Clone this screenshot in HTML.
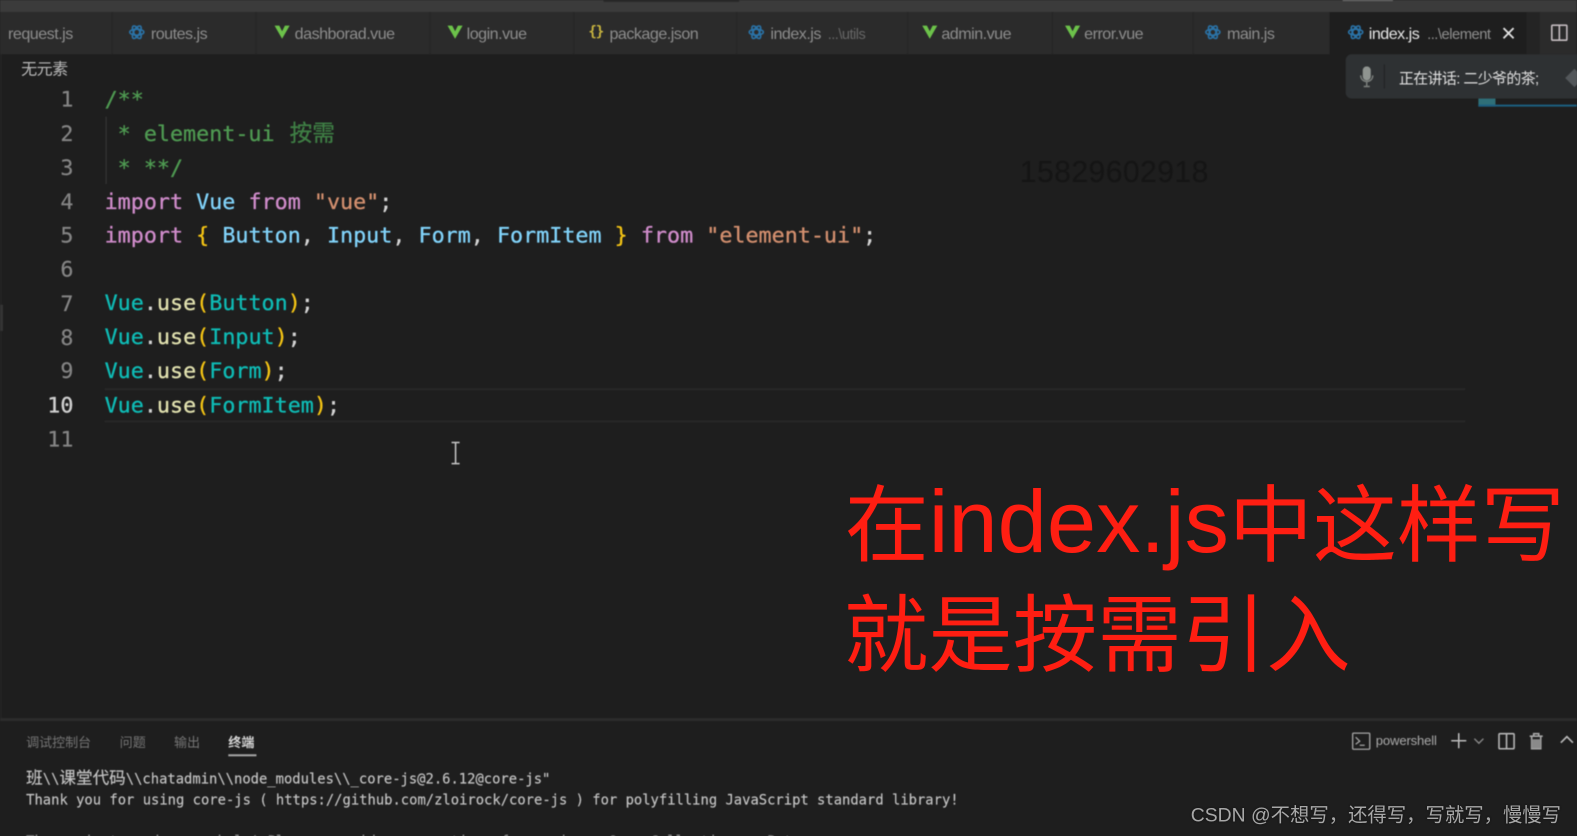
<!DOCTYPE html>
<html lang="zh">
<head>
<meta charset="utf-8">
<title>index.js</title>
<style>
html,body{margin:0;padding:0;width:1577px;height:836px;overflow:hidden;background:#1e1e1e}
#s{position:absolute;left:0;top:0;width:1568px;height:831px;transform:scale(1.0057);transform-origin:0 0;overflow:hidden;background:#1e1e1e;font-family:"Liberation Sans","Noto Sans CJK SC",sans-serif}
#b{position:absolute;left:0;top:0;width:1568px;height:831px;filter:blur(.45px)}
.a{position:absolute;white-space:pre}
.tab{font-size:16px;line-height:20px;top:24.5px;color:#8c8c8c;letter-spacing:-.5px}
.sep{position:absolute;top:12px;width:1px;height:42px;background:#252525}
.ic{position:absolute}
.ln{position:absolute;left:20px;width:53px;text-align:right;font:21.6px/34px "DejaVu Sans Mono",monospace;color:#858585;-webkit-text-stroke:.2px #858585}
.c{position:absolute;left:104px;font:21.6px/34px "DejaVu Sans Mono","Noto Sans CJK SC",monospace;white-space:pre;color:#d4d4d4;-webkit-text-stroke:.3px}
.cm{color:#4f9a52}.kw{color:#d08ccb}.bl{color:#82d4fb}.st{color:#d4906f}.ye{color:#f5c515}.te{color:#0fbcb6}.fn{color:#e2e2b0}.lt{color:#d4d4d4}
.pt{font-size:13px;line-height:18px;top:729.5px;color:#757575}
.t{position:absolute;left:26px;font:13.75px/20px "DejaVu Sans Mono","Noto Sans CJK SC",monospace;color:#c4c4c4;white-space:pre;-webkit-text-stroke:.15px}
</style>
</head>
<body>
<div id="s">
<div id="b">
  <!-- title bar -->
  <div class="a" style="left:0;top:0;width:1568px;height:12px;background:#3b3b3b"></div>
  <div class="a" style="left:600px;top:0;width:135px;height:2px;background:#2a2a2a"></div>
  <div class="a" style="left:1335px;top:0;width:50px;height:1px;background:#7a7a7a"></div>
  <!-- tab bar -->
  <div class="a" style="left:0;top:12px;width:1568px;height:42px;background:#2b2b2b"></div>
  <div class="sep" style="left:111px"></div>
  <div class="sep" style="left:254px"></div>
  <div class="sep" style="left:427px"></div>
  <div class="sep" style="left:570px"></div>
  <div class="sep" style="left:732px"></div>
  <div class="sep" style="left:902px"></div>
  <div class="sep" style="left:1046px"></div>
  <div class="sep" style="left:1186px"></div>
  <div class="a" style="left:1322px;top:12px;width:196px;height:42px;background:#1e1e1e"></div>
  <div class="a" style="left:1518px;top:12px;width:13px;height:42px;background:#242424"></div>

  <div class="a tab" style="left:8px">request.js</div>

  <svg class="ic" style="left:128px;top:24px" width="16" height="16" viewBox="0 0 16 16" fill="none" stroke="#2a72a6" stroke-width="1.6"><ellipse cx="8" cy="8" rx="7" ry="3"/><ellipse cx="8" cy="8" rx="7" ry="3" transform="rotate(60 8 8)"/><ellipse cx="8" cy="8" rx="7" ry="3" transform="rotate(120 8 8)"/></svg>
  <div class="a tab" style="left:150px">routes.js</div>

  <svg class="ic" style="left:273px;top:24px" width="15" height="16" viewBox="0 0 16 16"><path d="M0 1H5L8 7L11 1H16L8 15Z" fill="#6cc24a"/></svg>
  <div class="a tab" style="left:293px">dashborad.vue</div>

  <svg class="ic" style="left:445px;top:24px" width="15" height="16" viewBox="0 0 16 16"><path d="M0 1H5L8 7L11 1H16L8 15Z" fill="#6cc24a"/></svg>
  <div class="a tab" style="left:464px">login.vue</div>

  <div class="a" style="left:585px;top:22px;font:bold 14px/20px 'DejaVu Sans Mono',monospace;color:#c9b53f;letter-spacing:-1px">{}</div>
  <div class="a tab" style="left:606px">package.json</div>

  <svg class="ic" style="left:744px;top:24px" width="16" height="16" viewBox="0 0 16 16" fill="none" stroke="#2a72a6" stroke-width="1.6"><ellipse cx="8" cy="8" rx="7" ry="3"/><ellipse cx="8" cy="8" rx="7" ry="3" transform="rotate(60 8 8)"/><ellipse cx="8" cy="8" rx="7" ry="3" transform="rotate(120 8 8)"/></svg>
  <div class="a tab" style="left:766px">index.js</div>
  <div class="a tab" style="left:823px;font-size:14.5px;color:#666">...\utils</div>

  <svg class="ic" style="left:917px;top:24px" width="15" height="16" viewBox="0 0 16 16"><path d="M0 1H5L8 7L11 1H16L8 15Z" fill="#6cc24a"/></svg>
  <div class="a tab" style="left:936px">admin.vue</div>

  <svg class="ic" style="left:1059px;top:24px" width="15" height="16" viewBox="0 0 16 16"><path d="M0 1H5L8 7L11 1H16L8 15Z" fill="#6cc24a"/></svg>
  <div class="a tab" style="left:1078px">error.vue</div>

  <svg class="ic" style="left:1198px;top:24px" width="16" height="16" viewBox="0 0 16 16" fill="none" stroke="#2a72a6" stroke-width="1.6"><ellipse cx="8" cy="8" rx="7" ry="3"/><ellipse cx="8" cy="8" rx="7" ry="3" transform="rotate(60 8 8)"/><ellipse cx="8" cy="8" rx="7" ry="3" transform="rotate(120 8 8)"/></svg>
  <div class="a tab" style="left:1220px">main.js</div>

  <svg class="ic" style="left:1340px;top:24px" width="16" height="16" viewBox="0 0 16 16" fill="none" stroke="#2a72a6" stroke-width="1.6"><ellipse cx="8" cy="8" rx="7" ry="3"/><ellipse cx="8" cy="8" rx="7" ry="3" transform="rotate(60 8 8)"/><ellipse cx="8" cy="8" rx="7" ry="3" transform="rotate(120 8 8)"/></svg>
  <div class="a tab" style="left:1361px;color:#e6e6e6">index.js</div>
  <div class="a tab" style="left:1419px;font-size:14.7px;color:#8f8f8f">...\element</div>
  <svg class="ic" style="left:1494px;top:27px" width="12" height="12" viewBox="0 0 12 12" stroke="#e4e4e4" stroke-width="1.8"><path d="M1 1L11 11M11 1L1 11"/></svg>
  <svg class="ic" style="left:1542px;top:24px" width="17" height="17" viewBox="0 0 17 17" fill="none" stroke="#c4bcc0" stroke-width="1.6"><rect x="1" y="1" width="15" height="15" rx="1"/><path d="M8.5 1V16"/></svg>

  <!-- breadcrumb and left edge -->
  <div class="a" style="left:21px;top:60.5px;font-size:16px;line-height:18px;letter-spacing:-.6px;color:#b8b8b8">无元素</div>
  <div class="a" style="left:0;top:54px;width:2px;height:660px;background:#242424"></div>
  <div class="a" style="left:0;top:303px;width:3px;height:26px;background:#343434"></div>

  <!-- line numbers -->
  <div class="ln" style="top:83px">1</div>
  <div class="ln" style="top:117px">2</div>
  <div class="ln" style="top:150.5px">3</div>
  <div class="ln" style="top:184.5px">4</div>
  <div class="ln" style="top:218px">5</div>
  <div class="ln" style="top:251.5px">6</div>
  <div class="ln" style="top:285.5px">7</div>
  <div class="ln" style="top:319.5px">8</div>
  <div class="ln" style="top:353px">9</div>
  <div class="ln" style="top:386.5px;color:#d0d0d0;-webkit-text-stroke:.3px #d0d0d0">10</div>
  <div class="ln" style="top:420.5px">11</div>

  <!-- indent guide, current line -->
  <div class="a" style="left:105px;top:116px;width:1px;height:67px;background:#3a3a3a"></div>
  <div class="a" style="left:104px;top:386px;width:1353px;height:30px;border:solid #282828;border-width:2px 0"></div>

  <!-- code -->
  <div class="c" style="top:82.5px"><span class="cm">/**</span></div>
  <div class="c" style="top:116px"><span class="cm"> * element-ui <span style="font-size:22.5px;margin-left:2px;color:#3f7f45">按需</span></span></div>
  <div class="c" style="top:150.5px"><span class="cm"> * **/</span></div>
  <div class="c" style="top:184.5px"><span class="kw">import</span> <span class="bl">Vue</span> <span class="kw">from</span> <span class="st">"vue"</span><span class="lt">;</span></div>
  <div class="c" style="top:218px"><span class="kw">import</span> <span class="ye">{</span> <span class="bl">Button</span>, <span class="bl">Input</span>, <span class="bl">Form</span>, <span class="bl">FormItem</span> <span class="ye">}</span> <span class="kw">from</span> <span class="st">"element-ui"</span><span class="lt">;</span></div>
  <div class="c" style="top:285px"><span class="te">Vue</span>.<span class="fn">use</span><span class="ye">(</span><span class="te">Button</span><span class="ye">)</span>;</div>
  <div class="c" style="top:319px"><span class="te">Vue</span>.<span class="fn">use</span><span class="ye">(</span><span class="te">Input</span><span class="ye">)</span>;</div>
  <div class="c" style="top:353px"><span class="te">Vue</span>.<span class="fn">use</span><span class="ye">(</span><span class="te">Form</span><span class="ye">)</span>;</div>
  <div class="c" style="top:386.5px"><span class="te">Vue</span>.<span class="fn">use</span><span class="ye">(</span><span class="te">FormItem</span><span class="ye">)</span>;</div>

  <!-- I-beam -->
  <svg class="ic" style="left:447px;top:439px" width="12" height="23" viewBox="0 0 12 23" fill="none" stroke="#c8c8c8" stroke-width="1.5"><path d="M2 1H10M6 1V22M2 22H10"/></svg>

  <!-- watermark number -->
  <div class="a" style="left:1014px;top:155px;font-size:30px;line-height:34px;letter-spacing:.4px;color:#151515">15829602918</div>

  <!-- speaking toast -->
  <div class="a" style="left:1470px;top:98px;width:17px;height:8px;background:#2f6f78"></div>
  <div class="a" style="left:1470px;top:104px;width:98px;height:2px;background:#1d5f80"></div>
  <div class="a" style="left:1338px;top:54px;width:240px;height:44px;background:#2e3133;border-radius:6px"></div>
  <svg class="ic" style="left:1352px;top:66px" width="14" height="21" viewBox="0 0 14 21"><rect x="3" y="0" width="8" height="14" rx="4" fill="#8f9490"/><path d="M1 9C1 17 13 17 13 9" fill="none" stroke="#7c807d" stroke-width="1.4"/><path d="M7 15V20M4 20H10" stroke="#7c807d" stroke-width="1.4"/></svg>
  <div class="a" style="left:1376px;top:64px;width:1px;height:24px;background:#202224"></div>
  <div class="a" style="left:1391px;top:68.5px;font-size:14.8px;line-height:20px;letter-spacing:-.55px;color:#e0e0e0">正在讲话: 二少爷的茶;</div>
  <div class="a" style="left:1559px;top:71px;width:13px;height:13px;background:#53575a;transform:rotate(45deg)"></div>

  <!-- panel -->
  <div class="a" style="left:0;top:714px;width:1568px;height:3px;background:#2c2c2c"></div>
  <div class="a pt" style="left:26px;letter-spacing:-.1px">调试控制台</div>
  <div class="a pt" style="left:119px">问题</div>
  <div class="a pt" style="left:173px">输出</div>
  <div class="a pt" style="left:227px;color:#d4d4d4;font-weight:bold">终端</div>
  <div class="a" style="left:227px;top:750px;width:28px;height:2px;background:#a8a8a8"></div>

  <svg class="ic" style="left:1344px;top:728px" width="19" height="19" viewBox="0 0 19 19" fill="none" stroke="#a5a5a5" stroke-width="1.3"><rect x="1" y="1" width="17" height="16" rx="1"/><path d="M4 5L8 9L4 12M8 13H13"/></svg>
  <div class="a" style="left:1368px;top:728px;font-size:13px;line-height:18px;letter-spacing:-.15px;color:#aaa">powershell</div>
  <svg class="ic" style="left:1442px;top:728px" width="17" height="17" viewBox="0 0 17 17" stroke="#bdbdbd" stroke-width="1.5"><path d="M8.5 1V16M1 8.5H16"/></svg>
  <svg class="ic" style="left:1465px;top:733px" width="11" height="8" viewBox="0 0 11 8" fill="none" stroke="#8a8a8a" stroke-width="1.4"><path d="M1 1.5L5.5 6L10 1.5"/></svg>
  <svg class="ic" style="left:1489px;top:728px" width="18" height="18" viewBox="0 0 18 18" fill="none" stroke="#b5b5b5" stroke-width="1.6"><rect x="1.5" y="1.5" width="15" height="15" rx="1"/><path d="M9 1.5V16.5"/></svg>
  <svg class="ic" style="left:1520px;top:728px" width="15" height="18" viewBox="0 0 15 18" fill="none" stroke="#a8a8a8" stroke-width="1.6"><path d="M1 4H14M5 4V1.5H10V4M3 4V16.5H12V4"/><path d="M3 7H12V16H3Z" fill="#8a8a8a" stroke="none"/></svg>
  <svg class="ic" style="left:1551px;top:731px" width="14" height="9" viewBox="0 0 14 9" fill="none" stroke="#bdbdbd" stroke-width="1.6"><path d="M1 7.5L7 1.5L13 7.5"/></svg>

  <!-- terminal -->
  <div class="t" style="top:763.5px"><span style="font-size:16.5px;line-height:20px">班</span>\\<span style="font-size:16.5px;line-height:20px">课堂代码</span>\\chatadmin\\node_modules\\_core-js@2.6.12@core-js"</div>
  <div class="t" style="top:785.5px">Thank you for using core-js ( https://github.com/zloirock/core-js ) for polyfilling JavaScript standard library!</div>
  <div class="t" style="top:827px">The project needs your help! Please consider supporting of core-js on Open Collective or Patreon:</div>
</div>

<!-- sharp overlays -->
<div class="a" style="left:840px;top:467px;font-size:83.5px;line-height:110px;color:#ff1e12">在<span style="font-size:88px;position:relative;top:-3px">index.js</span>中这样写</div>
<div class="a" style="left:839px;top:576.5px;font-size:84px;line-height:110px;color:#ff1e12">就是按需引入</div>
<div class="a" style="left:1184px;top:801px;font-size:19.25px;line-height:22px;color:#a8a8a8;text-shadow:0 0 2px #111">CSDN @不想写，还得写，写就写，慢慢写</div>
</div>
</body>
</html>
